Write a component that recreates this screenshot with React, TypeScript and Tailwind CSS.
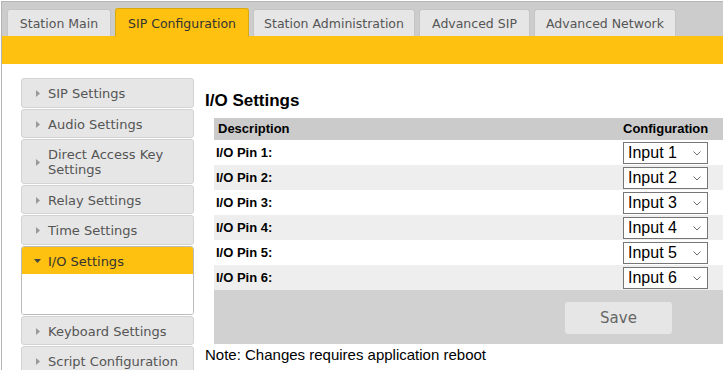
import React from "react";

const tabs = [
  { label: "Station Main", width: "w-[104px]", active: false },
  { label: "SIP Configuration", width: "w-[134px]", active: true },
  { label: "Station Administration", width: "w-[162px]", active: false },
  { label: "Advanced SIP", width: "w-[111px]", active: false },
  { label: "Advanced Network", width: "w-[142px]", active: false },
];

const menuTop = ["SIP Settings", "Audio Settings", "Direct Access Key Settings", "Relay Settings", "Time Settings"];
const menuBottom = ["Keyboard Settings", "Script Configuration"];

const pins = [1, 2, 3, 4, 5, 6];

const RightArrow = () => (
  <svg width="4" height="7" viewBox="0 0 4 7" className="shrink-0">
    <polygon points="0,0 4,3.5 0,7" fill="#999999" />
  </svg>
);

const DownArrow = () => (
  <svg width="7" height="4" viewBox="0 0 7 4" className="shrink-0">
    <polygon points="0,0 7,0 3.5,4" fill="#444444" />
  </svg>
);

const MenuItem = ({ label }: { label: string }) => (
  <div className="flex items-center rounded-[3px] border border-[#d3d3d3] bg-[#e6e6e6] pl-[14px] pr-2 pt-[7px] pb-[5.5px] text-[13px] leading-[15px] text-[#555555]">
    <span className="w-[12px] shrink-0 flex">
      <RightArrow />
    </span>
    <span>{label}</span>
  </div>
);

export default function App() {
  return (
    <div className="w-[723px] h-[370px] overflow-hidden bg-white font-['DejaVu_Sans',sans-serif]">
      <div className="ml-px mt-px h-[369px] border-l border-t border-[#b4b4b4]">
        {/* tab bar */}
        <div className="flex h-[34px] items-end gap-[4px] bg-[#cccccc] pl-[5px]">
          {tabs.map((t) =>
            t.active ? (
              <div
                key={t.label}
                className={`${t.width} -mb-px flex h-[29px] items-center justify-center whitespace-nowrap rounded-t-[3px] border border-b-0 border-[#d9a90f] bg-[#fec10f] pt-[2px] text-[12.5px] text-[#333333]`}
              >
                {t.label}
              </div>
            ) : (
              <div
                key={t.label}
                className={`${t.width} flex h-[27px] items-center justify-center whitespace-nowrap rounded-t-[3px] border border-b-0 border-[#c5c5c5] bg-[#e6e6e6] pt-[2px] text-[12.5px] text-[#555555]`}
              >
                {t.label}
              </div>
            )
          )}
        </div>
        <div className="h-[28px] bg-[#fec10f]" />

        <div className="flex pt-[14px]">
          {/* side menu */}
          <div className="ml-[19px] flex w-[173px] shrink-0 flex-col gap-px">
            {menuTop.map((m) => (
              <MenuItem key={m} label={m} />
            ))}
            <div className="overflow-hidden rounded-[3px] border border-[#bbbbbb]">
              <div className="flex items-center bg-[#fec10f] pl-[12px] pt-[7px] pb-[5px] text-[13px] leading-[15px] text-[#333333]">
                <span className="w-[14px] shrink-0 flex">
                  <DownArrow />
                </span>
                <span>I/O Settings</span>
              </div>
              <div className="h-[40px] bg-white" />
            </div>
            {menuBottom.map((m) => (
              <MenuItem key={m} label={m} />
            ))}
          </div>

          {/* content */}
          <div className="ml-[11px] font-['Liberation_Sans',Arial,sans-serif] text-black">
            <h3 className="mt-[13px] text-[17px] font-bold leading-[20px]">I/O Settings</h3>
            <table className="ml-[9px] mt-[7px] w-[809px] border-collapse text-[13px]">
              <thead>
                <tr className="h-[22px] bg-[#cbcbcb]">
                  <th className="w-[407px] pl-[4px] text-left font-bold">Description</th>
                  <th className="pl-[2px] text-left font-bold">Configuration</th>
                </tr>
              </thead>
              <tbody>
                {pins.map((p) => (
                  <tr key={p} className={`h-[25px] ${p % 2 === 0 ? "bg-[#eeeeee]" : "bg-white"}`}>
                    <td className="pl-[2px] font-bold">I/O Pin {p}:</td>
                    <td className="pl-[2px]">
                      <div className="relative h-[22px] w-[85px]">
                        <select
                          defaultValue={`Input ${p}`}
                          className="h-[22px] w-[85px] appearance-none border border-[#767676] bg-white pl-[4px] text-[16px] leading-[20px] text-black outline-none"
                        >
                          {pins.map((o) => (
                            <option key={o}>Input {o}</option>
                          ))}
                        </select>
                        <svg
                          width="8"
                          height="5"
                          viewBox="0 0 8 5"
                          className="pointer-events-none absolute right-[7px] top-[9px]"
                        >
                          <polyline points="0.5,0.5 4,4 7.5,0.5" fill="none" stroke="#6d6d6d" strokeWidth="1" />
                        </svg>
                      </div>
                    </td>
                  </tr>
                ))}
                <tr className="bg-[#d2d1d2]">
                  <td colSpan={2} className="pt-[12px] pb-[10px]">
                    <div className="flex justify-center">
                      <button className="h-[32px] w-[107px] rounded-[3px] bg-[#e6e6e6] font-['DejaVu_Sans',sans-serif] text-[15px] text-[#666666]">
                        Save
                      </button>
                    </div>
                  </td>
                </tr>
              </tbody>
            </table>
            <p className="mt-[2px] text-[15px] leading-[17px]">Note: Changes requires application reboot</p>
          </div>
        </div>
      </div>
    </div>
  );
}
